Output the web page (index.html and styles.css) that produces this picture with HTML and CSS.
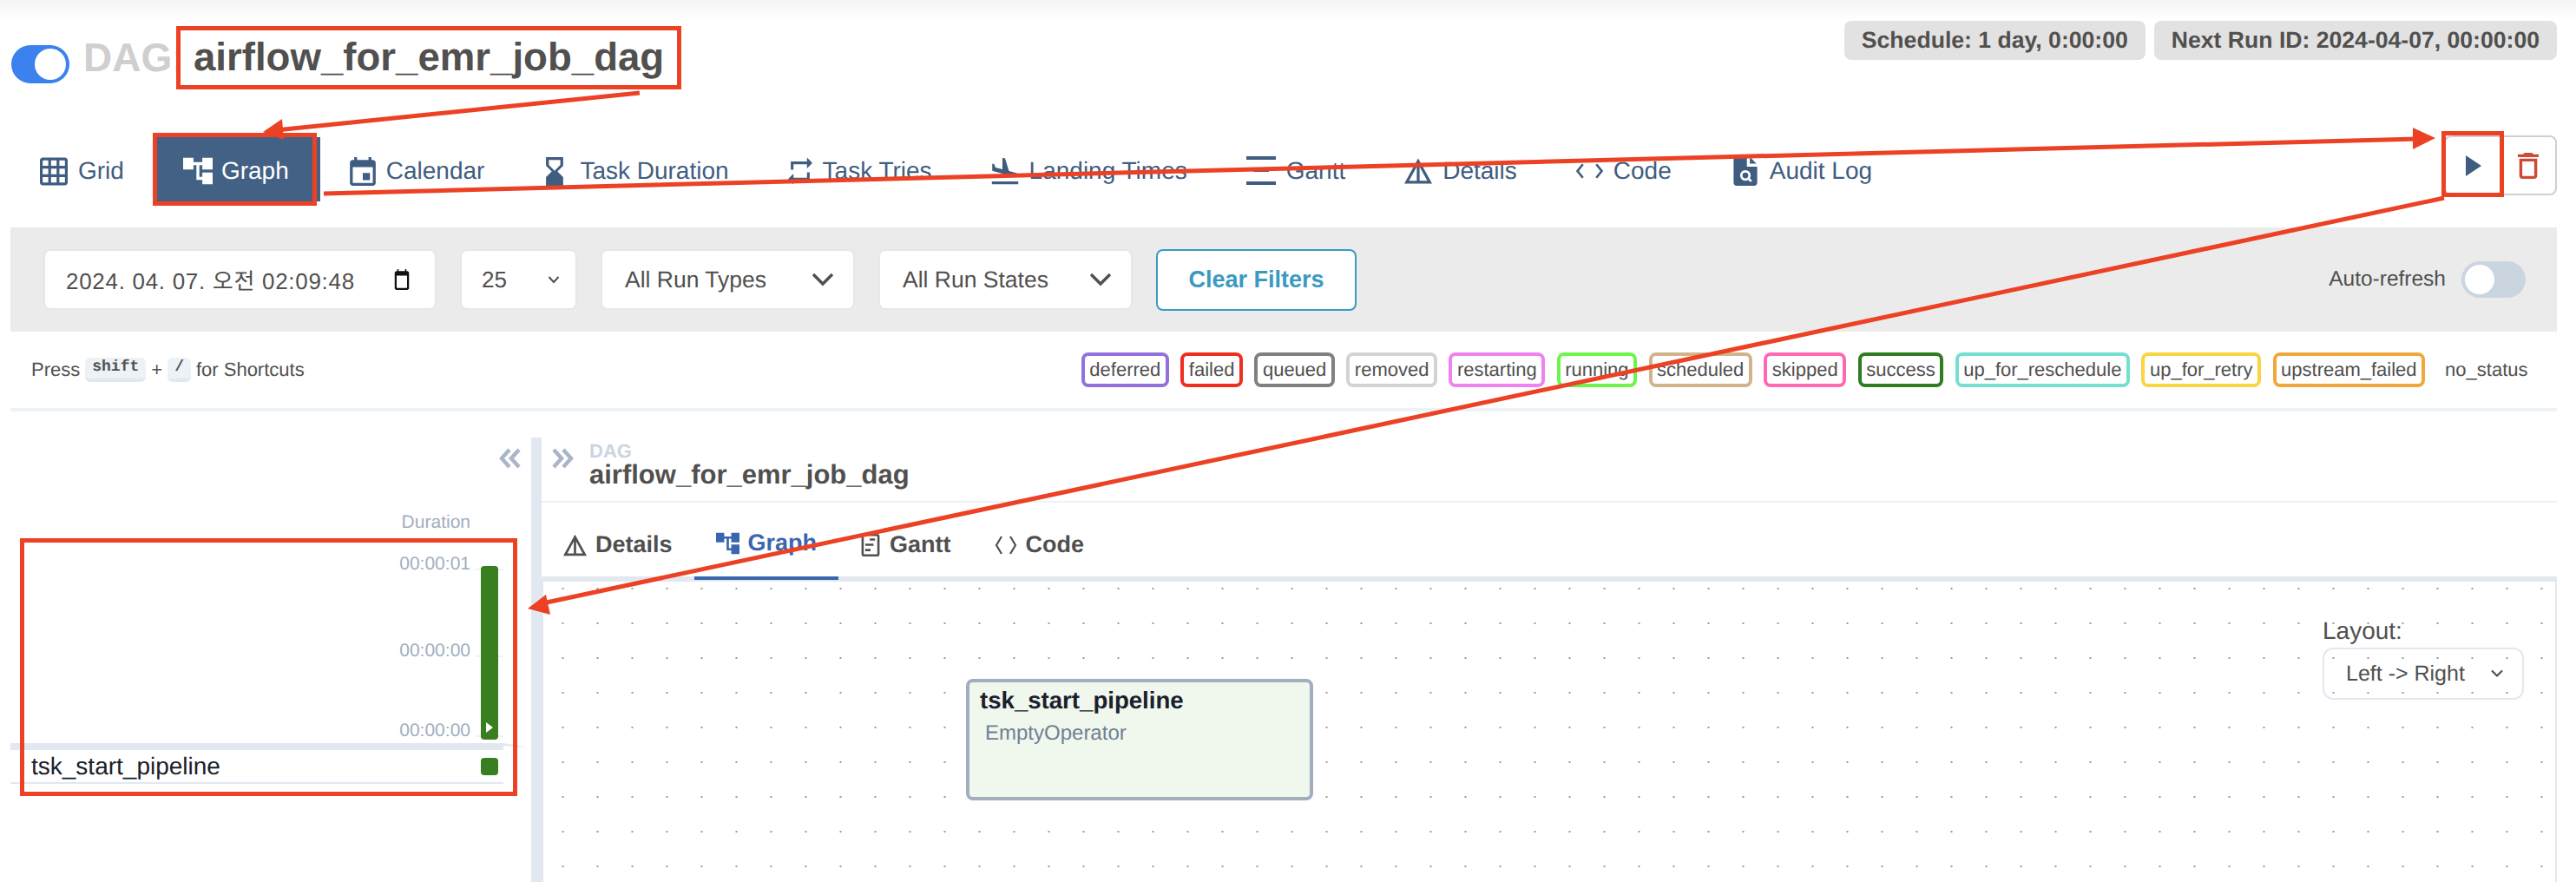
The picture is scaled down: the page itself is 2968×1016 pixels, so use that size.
FILE: index.html
```html
<!doctype html>
<html lang="en">
  <head>
    <meta charset="utf-8">
    <title>airflow_for_emr_job_dag - Graph</title>
    <link rel="stylesheet" href="styles.css">
  </head>
  <body>
    <header class="dag-head">
      <div class="dag-title">
        <span class="toggle"><span class="knob"></span></span>
        <span class="dag-word">DAG:</span>
        <span class="dag-name">airflow_for_emr_job_dag</span>
      </div>
      <div class="pills">
        <span class="pill">Schedule: 1 day, 0:00:00</span>
        <span class="pill">Next Run ID: 2024-04-07, 00:00:00</span>
      </div>
    </header>

    <nav class="view-tabs">
      <a class="view-tab"><svg class="ic ic-grid" viewBox="2 2 20 20"><path d="M20 2H4c-1.1 0-2 .9-2 2v16c0 1.1.9 2 2 2h16c1.1 0 2-.9 2-2V4c0-1.1-.9-2-2-2zM8 20H4v-4h4v4zm0-6H4v-4h4v4zm0-6H4V4h4v4zm6 12h-4v-4h4v4zm0-6h-4v-4h4v4zm0-6h-4V4h4v4zm6 12h-4v-4h4v4zm0-6h-4v-4h4v4zm0-6h-4V4h4v4z"/></svg>Grid</a>
      <a class="view-tab active"><svg class="ic ic-tree" viewBox="2 3 20 18"><path d="M22 11V3h-7v3H9V3H2v8h7V8h2v10h4v3h7v-8h-7v3h-2V8h2v3z"/></svg>Graph</a>
      <a class="view-tab"><svg class="ic ic-cal" viewBox="3 1 18 20"><path d="M17 12h-5v5h5v-5zM16 1v2H8V1H6v2H5c-1.11 0-1.99.9-1.99 2L3 19c0 1.1.89 2 2 2h14c1.1 0 2-.9 2-2V5c0-1.1-.9-2-2-2h-1V1h-2zm3 18H5V8h14v11z"/></svg>Calendar</a>
      <a class="view-tab"><svg class="ic ic-hour" viewBox="6 2 12 20"><path d="M18 22l-.01-6L14 12l3.99-4.01L18 2H6v6l4 4-4 3.99V22h12zM8 7.5V4h8v3.5l-4 4-4-4z"/></svg>Task Duration</a>
      <a class="view-tab"><svg class="ic ic-repeat" viewBox="3 2 18 20"><path d="M7 7h10v3l4-4-4-4v3H5v6h2V7zm10 10H7v-3l-4 4 4 4v-3h12v-6h-2v4z"/></svg>Task Tries</a>
      <a class="view-tab"><svg class="ic ic-land" viewBox="2 2 20 19"><path d="M2.5 19h19v2h-19v-2zm7.18-5.73l4.35 1.16 5.31 1.42c.8.21 1.62-.26 1.84-1.06.21-.8-.26-1.62-1.06-1.84l-5.31-1.42-2.76-9.02L10.12 2v8.28L5.15 8.95l-.93-2.32-1.45-.39v5.17l1.6.43 5.31 1.43z"/></svg>Landing Times</a>
      <a class="view-tab"><svg class="ic ic-gantt" viewBox="0 0 34 34"><path d="M0 0h34v4H0zM8 15h18v3H8zM0 29h34v4H0z"/></svg>Gantt</a>
      <a class="view-tab"><svg class="ic ic-details" viewBox="2 3 20 18"><path d="M12 3L2 21h20L12 3zm1 5.92L18.6 19H13V8.92zm-2 0V19H5.4L11 8.92z"/></svg>Details</a>
      <a class="view-tab"><svg class="ic ic-code" viewBox="2 6 20 12"><path d="M7 7l-4 5 4 5M17 7l4 5-4 5" fill="none" stroke="currentColor" stroke-width="1.7"/></svg>Code</a>
      <a class="view-tab"><svg class="ic ic-audit" viewBox="4 2 16 20"><path d="M13 2H6c-1.1 0-2 .9-2 2v16c0 1.1.9 2 2 2h12c1.1 0 2-.9 2-2V9h-7V2zM15 2.5V7h4.500z"/><circle cx="12" cy="15" r="2.800" fill="none" stroke="#fff" stroke-width="1.600"/><path d="M14 17l2 2" stroke="#fff" stroke-width="1.600"/></svg>Audit Log</a>
      <div class="view-actions">
        <span class="action-btn"><svg class="ic-play" viewBox="0 0 18 24"><path d="M0 0l18 12L0 24z"/></svg></span>
        <span class="action-btn"><svg class="ic-trash" viewBox="5 3 14 18" preserveAspectRatio="none"><path d="M6 19c0 1.100.9 2 2 2h8c1.100 0 2-.9 2-2V7H6v12zM8 9h8v10H8V9zm7.500-5l-1-1h-5l-1 1H5v2h14V4z"/></svg></span>
      </div>
    </nav>

    <section class="filter-bar">
      <div class="field field-date"><span class="date-text">2024. 04. 07. 오전 02:09:48</span><svg class="ic-date" viewBox="0 0 22 32"><path d="M4 0h2v3h10V0h2v3h1c1.700 0 3 1.300 3 3v23c0 1.700-1.300 3-3 3H3c-1.700 0-3-1.300-3-3V6c0-1.700 1.300-3 3-3h1zM3 10v18c0 .6.4 1 1 1h14c.6 0 1-.4 1-1V10z"/></svg></div>
      <div class="field field-num"><span>25</span><svg class="chev-small" viewBox="0 0 14 10"><path d="M1.500 2l5.500 6 5.500-6" fill="none" stroke="currentColor" stroke-width="2"/></svg></div>
      <div class="field field-type"><span>All Run Types</span><svg class="chev-big" viewBox="0 0 26 16"><path d="M2 2l11 11L24 2" fill="none" stroke="currentColor" stroke-width="3.400"/></svg></div>
      <div class="field field-type"><span>All Run States</span><svg class="chev-big" viewBox="0 0 26 16"><path d="M2 2l11 11L24 2" fill="none" stroke="currentColor" stroke-width="3.400"/></svg></div>
      <button class="clear-btn" type="button">Clear Filters</button>
      <div class="auto-refresh">
        <span>Auto-refresh</span>
        <span class="switch"><span class="switch-knob"></span></span>
      </div>
    </section>

    <section class="legend-row">
      <div class="shortcuts">Press <kbd class="key">shift</kbd> + <kbd class="key">/</kbd> for Shortcuts</div>
      <div class="legend">
        <span class="state st-deferred">deferred</span>
        <span class="state st-failed">failed</span>
        <span class="state st-queued">queued</span>
        <span class="state st-removed">removed</span>
        <span class="state st-restarting">restarting</span>
        <span class="state st-running">running</span>
        <span class="state st-scheduled">scheduled</span>
        <span class="state st-skipped">skipped</span>
        <span class="state st-success">success</span>
        <span class="state st-reschedule">up_for_reschedule</span>
        <span class="state st-retry">up_for_retry</span>
        <span class="state st-upstream">upstream_failed</span>
        <span class="state st-none">no_status</span>
      </div>
    </section>

    <main class="main">
      <aside class="grid-panel">
        <div class="collapse-row"><svg class="dbl-chev" viewBox="0 0 25 24"><path d="M12 2L3 12l9 10M23 2l-9 10 9 10" fill="none" stroke="currentColor" stroke-width="4.500"/></svg></div>
        <div class="duration-label">Duration</div>
        <div class="chart">
          <div class="tick tick-top"><span>00:00:01</span><i></i></div>
          <div class="tick tick-mid"><span>00:00:00</span><i></i></div>
          <div class="tick tick-low"><span>00:00:00</span><i></i></div>
          <div class="run-bar"><svg viewBox="0 0 8 12"><path d="M0 0l8 6-8 6z"/></svg></div>
        </div>
        <div class="grid-divider"></div>
        <div class="task-row">
          <span>tsk_start_pipeline</span>
          <i class="task-square"></i>
        </div>
      </aside>
      <div class="panel-rule"></div>
      <section class="details">
        <div class="details-head">
          <svg class="dbl-chev" viewBox="0 0 25 24"><path d="M2 2l9 10-9 10M13 2l9 10-9 10" fill="none" stroke="currentColor" stroke-width="4.500"/></svg>
          <div>
            <div class="crumb-label">DAG</div>
            <div class="crumb-value">airflow_for_emr_job_dag</div>
          </div>
        </div>
        <div class="detail-tabs">
          <a class="detail-tab"><svg class="ic-d" viewBox="2 3 20 18"><path d="M12 3L2 21h20L12 3zm1 5.920L18.600 19H13V8.920zm-2 0V19H5.400L11 8.920z"/></svg>Details</a>
          <a class="detail-tab active"><svg class="ic-g" viewBox="2 3 20 18"><path d="M22 11V3h-7v3H9V3H2v8h7V8h2v10h4v3h7v-8h-7v3h-2V8h2v3z"/></svg>Graph</a>
          <a class="detail-tab"><svg class="ic-gn" viewBox="0 0 24 30"><path d="M3 0h18c1.700 0 3 1.300 3 3v24c0 1.700-1.300 3-3 3H3c-1.700 0-3-1.300-3-3V3c0-1.700 1.300-3 3-3zm0 3v24h18V3zM11 6h7v3h-7zM5 13h11v3H5zM5 20h7v3H5z"/></svg>Gantt</a>
          <a class="detail-tab"><svg class="ic-c" viewBox="0 0 26 26"><path d="M8 3L2 13l6 10M18 3l6 10-6 10" fill="none" stroke="currentColor" stroke-width="2.200"/></svg>Code</a>
        </div>
        <div class="canvas">
          <div class="node">
            <div class="node-title">tsk_start_pipeline</div>
            <div class="node-type">EmptyOperator</div>
          </div>
          <div class="layout-box">
            <div class="layout-label">Layout:</div>
            <div class="layout-select"><span>Left -&gt; Right</span><svg viewBox="0 0 14 10"><path d="M1 1.500l6 6 6-6" fill="none" stroke="currentColor" stroke-width="2.200"/></svg></div>
          </div>
        </div>
      </section>
    </main>

    <!-- red annotations drawn on top of the screenshot -->
    <svg class="marks" viewBox="0 0 2968 1016">
      <g fill="none" stroke="#ec4124" stroke-width="5">
        <rect x="178.500" y="155.500" width="184" height="79"/>
        <rect x="2815.500" y="153.500" width="67" height="71"/>
        <rect x="25.500" y="622.500" width="568" height="292"/>
        <path d="M737 107L318 150"/>
        <path d="M373 223L2785 160"/>
        <path d="M2816 228L625 695"/>
      </g>
      <g fill="#ec4124">
        <path d="M303 152L325 137L327 161z"/>
        <path d="M2806 159L2780 147L2780 172z"/>
        <path d="M608 701L629 685L634 708z"/>
      </g>
    </svg>
  </body>
</html>
```

FILE: styles.css
```css
* {
  box-sizing: border-box;
}
body {
  margin: 0;
  width: 2968px;
  height: 1016px;
  overflow: hidden;
  position: relative;
  font-family: "Liberation Sans", "Noto Sans CJK KR", sans-serif;
  text-rendering: geometricPrecision;
  color: #51504f;
  background: linear-gradient(#f5f5f5, #fff 24px) no-repeat;
}

/* header */
.dag-head {
  height: 158px;
  display: flex;
  justify-content: space-between;
  align-items: flex-start;
  padding-right: 22px;
}
.dag-title {
  display: flex;
  align-items: flex-start;
  margin-top: 30px;
  margin-left: 13px;
}
.toggle {
  width: 67px;
  height: 44px;
  margin-top: 22px;
  padding: 4px;
  border-radius: 22px;
  background: #3b82ee;
  display: flex;
  justify-content: flex-end;
}
.knob {
  width: 36px;
  height: 36px;
  border-radius: 50%;
  background: #fff;
}
.dag-word {
  width: 107px;
  margin-left: 16px;
  white-space: nowrap;
  font-size: 46px;
  font-weight: bold;
  line-height: 73px;
  color: #cfcfcf;
}
.dag-name {
  position: relative;
  height: 73px;
  padding: 0 15px;
  border: 5px solid #ec4124;
  background: #fff;
  font-size: 45.6px;
  font-weight: bold;
  line-height: 62px;
  white-space: nowrap;
}
.pills {
  display: flex;
  gap: 10px;
  margin-top: 24px;
}
.pill {
  height: 45px;
  padding: 0 20px;
  border-radius: 8px;
  background: #e2e2e2;
  font-size: 26.600px;
  font-weight: bold;
  line-height: 45px;
}

/* view tabs */
.view-tabs {
  height: 74px;
  margin-bottom: 30px;
  margin-right: 22px;
  margin-left: 12px;
  display: flex;
  align-items: stretch;
}
.view-tab {
  display: flex;
  align-items: center;
  gap: 12px;
  padding: 4px 34px 0;
  font-size: 28px;
  color: #3f5d80;
}
.view-tab.active {
  gap: 10px;
  padding-right: 36px;
  background: #436085;
  color: #fff;
}
.ic {
  fill: currentColor;
  flex: none;
}
.ic-grid { width: 32px; height: 33px; }
.ic-tree { width: 34px; height: 32px; }
.ic-cal { width: 30px; height: 33px; }
.ic-hour { width: 22px; height: 33px; margin: 0 6px 0 2px; }
.ic-repeat { width: 28px; height: 32px; }
.ic-land { width: 32px; height: 32px; }
.ic-gantt { width: 34px; height: 34px; }
.ic-details { width: 32px; height: 30px; }
.ic-code { width: 31px; height: 24px; }
.ic-audit { width: 28px; height: 34px; margin: 0 2px 0 3px; }

.view-actions {
  margin-left: auto;
  width: 130px;
  height: 69px;
  margin-top: -2px;
  display: flex;
  border: 2px solid #cfcfcf;
  border-radius: 8px;
}
.action-btn {
  flex: 1;
  display: flex;
  align-items: center;
  justify-content: center;
}
.ic-play {
  width: 18px;
  height: 24px;
  fill: #3f5d80;
}
.ic-trash {
  width: 24px;
  height: 30px;
  fill: #cf4a36;
}

/* filters */
.filter-bar {
  height: 120px;
  margin: 0 22px 0 12px;
  padding: 25px 36px 25px 38px;
  display: flex;
  align-items: center;
  gap: 27px;
  background: #ebebeb;
}
.field {
  height: 70px;
  display: flex;
  align-items: center;
  justify-content: space-between;
  border: 2px solid #e2e8f0;
  border-radius: 8px;
  background: #fff;
  font-size: 26.500px;
}
.field-date {
  width: 453px;
  padding: 0 28px 0 24px;
  font-size: 26px;
}
.date-text {
  letter-spacing: 0.7px;
}
.field-num {
  width: 135px;
  padding: 0 18px 0 23px;
  font-size: 26px;
}
.field-type {
  width: 293px;
  padding: 0 22px 0 26px;
}
.ic-date {
  width: 20px;
  height: 24px;
  fill: #111;
}
.chev-small {
  width: 14px;
  height: 10px;
}
.chev-big {
  width: 26px;
  height: 16px;
}
.clear-btn {
  width: 231px;
  height: 71px;
  border: 2px solid #3a9abf;
  border-radius: 8px;
  background: #fff;
  color: #3a9abf;
  font-family: inherit;
  font-size: 27px;
  font-weight: bold;
}
.auto-refresh {
  margin-left: auto;
  display: flex;
  align-items: center;
  gap: 18px;
  font-size: 24.500px;
}
.switch {
  width: 74px;
  height: 42px;
  padding: 4px;
  border-radius: 21px;
  background: #cbd5e0;
}
.switch-knob {
  display: block;
  width: 34px;
  height: 34px;
  border-radius: 50%;
  background: #fff;
}

/* legend */
.legend-row {
  height: 92px;
  margin: 0 22px 0 12px;
  padding: 0 24px 0 24px;
  display: flex;
  align-items: center;
  justify-content: space-between;
  border-bottom: 4px solid #edf2f7;
  font-size: 22px;
}
.shortcuts {
  display: flex;
  align-items: center;
  gap: 6px;
}
.key {
  height: 28px;
  padding: 0 8px;
  border-radius: 6px;
  border-bottom: 4px solid #e2e8f0;
  background: #edf2f7;
  font-family: "Liberation Mono", monospace;
  font-size: 18px;
  font-weight: bold;
  line-height: 23px;
}
.legend {
  display: flex;
  gap: 13.500px;
}
.state {
  height: 40px;
  padding: 0 5.500px;
  border: 4px solid transparent;
  border-radius: 8px;
  line-height: 32px;
}
.st-deferred { border-color: #9370db; }
.st-failed { border-color: #ee2e1f; }
.st-queued { border-color: #808080; }
.st-removed { border-color: #d3d3d3; }
.st-restarting { border-color: #ee82ee; }
.st-running { border-color: #6df548; }
.st-scheduled { border-color: #d2b48c; }
.st-skipped { border-color: #ff69b4; }
.st-success { border-color: #2e7d1f; }
.st-reschedule { border-color: #75dfd0; }
.st-retry { border-color: #f8d541; }
.st-upstream { border-color: #f0a83c; }

/* lower part */
.main {
  height: 542px;
  margin: 0 22px 0 12px;
  padding-top: 30px;
  display: flex;
}
.grid-panel {
  width: 600px;
  flex: none;
}
.collapse-row {
  height: 24px;
  margin-top: 12px;
  padding-right: 12px;
  text-align: right;
  line-height: 0;
}
.dbl-chev {
  width: 25px;
  height: 24px;
  color: #a9b6c8;
}
.duration-label {
  height: 24px;
  margin-top: 50px;
  margin-right: 70px;
  text-align: right;
  font-size: 21px;
  line-height: 24px;
  color: #a0aec0;
}
.chart {
  position: relative;
  height: 242px;
  padding-top: 24px;
}
.tick {
  position: relative;
  display: flex;
  align-items: center;
  justify-content: flex-end;
  height: 24px;
  padding-right: 70px;
  font-size: 21px;
  color: #a0aec0;
}
.tick i {
  position: absolute;
  right: 32px;
  bottom: 5px;
  width: 32px;
  height: 2px;
  background: #edf2f7;
}
.tick-mid { margin-top: 76px; }
.tick-low { margin-top: 68px; }
.run-bar {
  position: absolute;
  left: 542px;
  top: 38px;
  width: 20px;
  height: 200px;
  border-radius: 4px;
  background: #38801f;
  display: flex;
  align-items: flex-end;
  justify-content: center;
  padding-bottom: 8px;
}
.run-bar svg {
  width: 8px;
  height: 12px;
  fill: #fff;
}
.grid-divider {
  height: 8px;
  background: #e2e8f0;
  clip-path: polygon(0 0, 568px 0, 598px 5px, 568px 3px, 568px 8px, 0 8px);
}
.task-row {
  width: 568px;
  height: 39px;
  padding: 0 6px 0 24px;
  display: flex;
  align-items: center;
  justify-content: space-between;
  border-bottom: 2px solid #e2e8f0;
  font-size: 28px;
  color: #1a202c;
}
.task-square {
  width: 20px;
  height: 20px;
  border-radius: 4px;
  background: #38801f;
}
.panel-rule {
  width: 12px;
  flex: none;
  background: #e2e8f0;
}
.details {
  flex: 1;
  display: flex;
  flex-direction: column;
}
.details-head {
  height: 75px;
  padding-left: 12px;
  display: flex;
  gap: 18px;
  border-bottom: 2px solid #edf2f7;
}
.details-head .dbl-chev {
  margin-top: 12px;
}
.crumb-label {
  margin-top: 5px;
  font-size: 22px;
  font-weight: bold;
  line-height: 22px;
  color: #cbd5e0;
}
.crumb-value {
  font-size: 31px;
  font-weight: bold;
  line-height: 32px;
}
.detail-tabs {
  height: 91px;
  display: flex;
  border-bottom: 6px solid #e2e8f0;
}
.detail-tab {
  height: 89px;
  padding: 8px 25px 0;
  display: flex;
  align-items: center;
  gap: 10px;
  font-size: 27px;
  font-weight: bold;
}
.detail-tab svg {
  fill: currentColor;
  flex: none;
}
.detail-tab.active {
  color: #3a66ad;
  border-bottom: 4px solid #3a66ad;
}
.ic-d { width: 27px; height: 26px; }
.ic-g { width: 27px; height: 26px; }
.ic-gn { width: 24px; height: 26px; }
.ic-c { width: 26px; height: 26px; }
.canvas {
  position: relative;
  flex: 1;
  border-left: 2px solid #e2e8f0;
  border-right: 2px solid #e2e8f0;
  background: radial-gradient(circle, #9a9a9a 1px, transparent 1.300px) 2.500px -12px / 40px 40px;
}
.node {
  position: absolute;
  left: 487px;
  top: 112px;
  width: 400px;
  height: 140px;
  padding: 5px 12px;
  border: 4px solid #a0aec0;
  border-radius: 8px;
  background: #f0f7ec;
}
.node-title {
  font-size: 27.600px;
  font-weight: bold;
  line-height: 32px;
  color: #1a202c;
}
.node-type {
  margin-top: 7px;
  margin-left: 6px;
  font-size: 24px;
  line-height: 30px;
  color: #718096;
}
.layout-box {
  position: absolute;
  left: 2050px;
  top: 40px;
  width: 232px;
}
.layout-label {
  font-size: 28px;
  line-height: 34px;
}
.layout-select {
  height: 60px;
  margin-top: 2px;
  padding: 0 22px 0 25px;
  display: flex;
  align-items: center;
  justify-content: space-between;
  border: 2px solid #e2e8f0;
  border-radius: 12px;
  font-size: 25px;
}
.layout-select svg {
  width: 14px;
  height: 10px;
}

.marks {
  position: absolute;
  left: 0;
  top: 0;
  width: 2968px;
  height: 1016px;
  pointer-events: none;
}
```
